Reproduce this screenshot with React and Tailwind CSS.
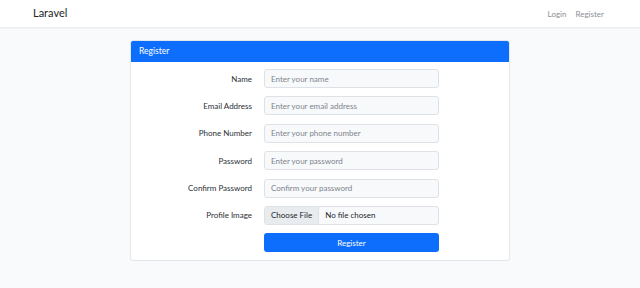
import React from 'react';

const fields = [
  { label: 'Name', placeholder: 'Enter your name', type: 'text' },
  { label: 'Email Address', placeholder: 'Enter your email address', type: 'email' },
  { label: 'Phone Number', placeholder: 'Enter your phone number', type: 'text' },
  { label: 'Password', placeholder: 'Enter your password', type: 'password' },
  { label: 'Confirm Password', placeholder: 'Confirm your password', type: 'password' },
];

function Row({ label, children }) {
  return (
    <div className="flex items-center h-[19px]">
      <label className="w-[133px] pr-[12px] text-right text-[8px] text-[#2b3035]">{label}</label>
      {children}
    </div>
  );
}

export default function App() {
  return (
    <div className="min-h-[288px] bg-[#f8fafc] font-['Lato',_'Open_Sans',_sans-serif]">
      {/* Navbar */}
      <nav className="h-[27px] bg-white shadow-[0_1px_2px_rgba(0,0,0,0.08)] flex items-center justify-between pl-[33px] pr-[36px]">
        <a className="text-[11px] text-[#212529]">Laravel</a>
        <div className="flex gap-[9px] text-[8px] text-[#8a8f94]">
          <a>Login</a>
          <a>Register</a>
        </div>
      </nav>

      {/* Card */}
      <div className="pt-[13px] flex justify-center">
        <div className="w-[380px] bg-white border border-[#e3e6ea] rounded-[3px] overflow-hidden">
          <div className="h-[21px] bg-[#0d6efd] text-white text-[8.5px] flex items-center px-[8px]">Register</div>
          <div className="pt-[7px] pb-[8px] flex flex-col gap-[8.4px]">
            {fields.map((f) => (
              <Row key={f.label} label={f.label}>
                <input
                  type={f.type}
                  placeholder={f.placeholder}
                  className="w-[175px] h-[19px] bg-[#f8f9fb] border border-[#dee2e6] rounded-[3px] px-[6px] text-[8px] placeholder:text-[#7d848b] outline-none"
                />
              </Row>
            ))}
            <Row label="Profile Image">
              <div className="w-[175px] h-[19px] flex items-center bg-[#f8f9fb] border border-[#dee2e6] rounded-[3px] overflow-hidden text-[8px] text-[#212529]">
                <span className="h-full flex items-center px-[6px] bg-[#e9ecef] border-r border-[#dee2e6]">Choose File</span>
                <span className="px-[6px]">No file chosen</span>
              </div>
            </Row>
            <div className="flex h-[19px]">
              <div className="w-[133px]" />
              <button className="w-[175px] h-[19px] bg-[#0d6efd] text-white text-[8px] rounded-[3px]">Register</button>
            </div>
          </div>
        </div>
      </div>
    </div>
  );
}
